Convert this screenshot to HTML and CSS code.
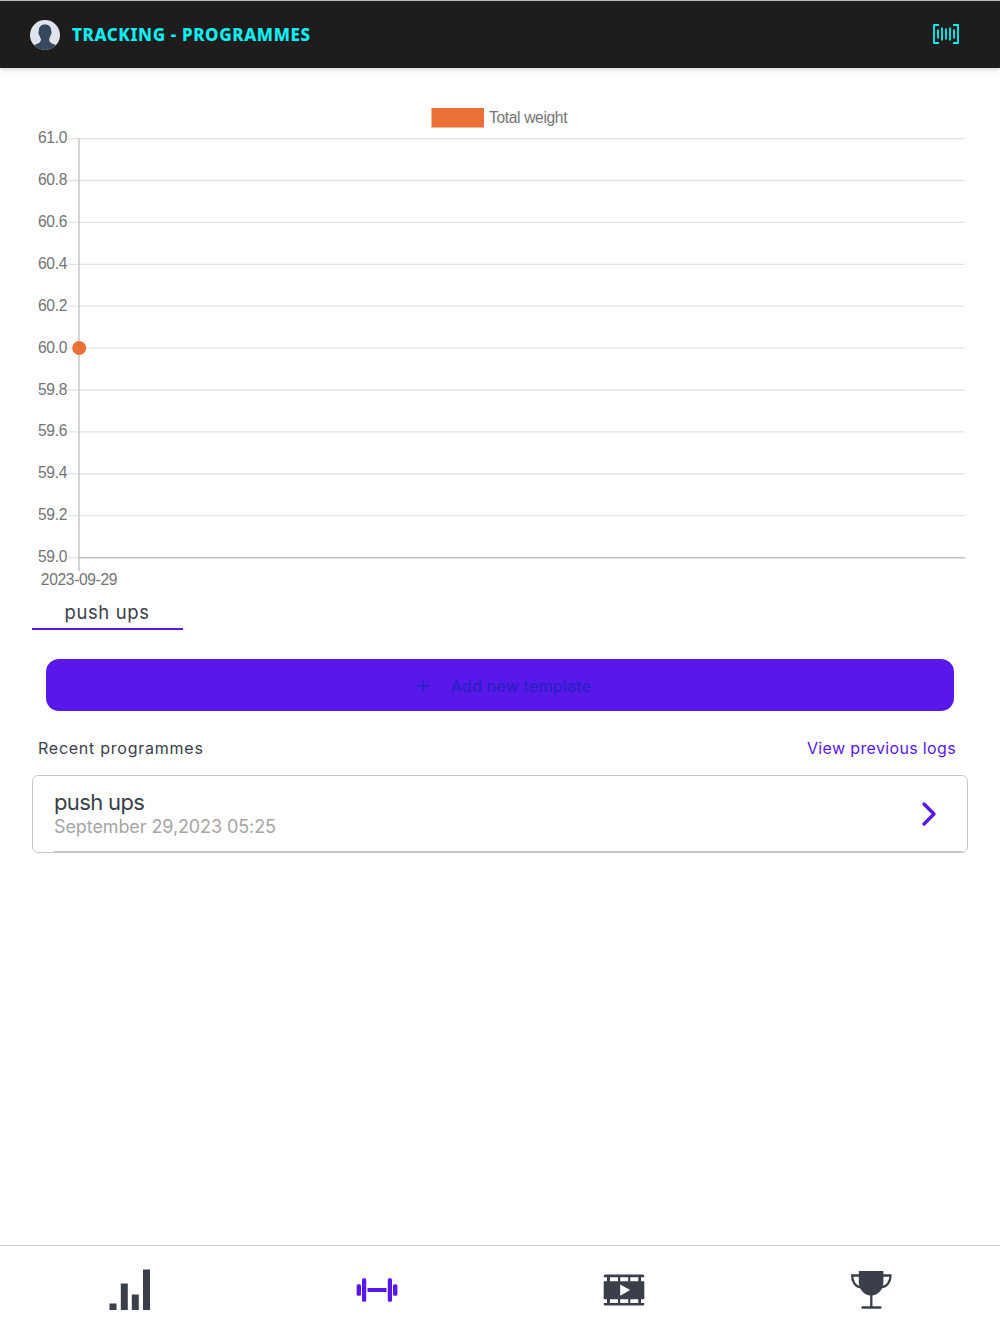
FILE: index.html
```html
<!DOCTYPE html>
<html lang="en">
<head>
    <meta charset="UTF-8">
    <meta name="viewport" content="width=device-width, initial-scale=1.0">
    <title>Tracking - Programmes</title>
    <link rel="stylesheet" href="styles.css">
</head>
<body>
    <header class="top-bar">
        <svg class="avatar" viewBox="0 0 30 30">
            <defs><clipPath id="avatar-clip"><circle cx="15" cy="15" r="15"/></clipPath></defs>
            <g clip-path="url(#avatar-clip)">
                <rect width="30" height="30" fill="#e0e5ed"/>
                <path fill="#34495e" d="M15 4.500c4 0 6.300 2.600 6.200 6.200 0 1 .5 1.300.3 2.800-.2 1-.8 1.400-1 2-.4 1.600-.8 2.500-1.400 3.300 0 2.400.8 3.500 2.500 4.400 2.500 1.200 4.600 1.500 6.500 3.800v3H2v-3c1.900-2.300 4-2.600 6.500-3.800 1.700-.9 2.500-2 2.500-4.400-.7-.8-1.100-1.700-1.500-3.300-.2-.6-.8-1-1-2-.2-1.500.3-1.800.3-2.800C8.700 7.100 11 4.500 15 4.500z"/>
            </g>
        </svg>
        <h1>TRACKING - PROGRAMMES</h1>
        <svg class="barcode" viewBox="0 0 26 20">
            <path d="M6 1H1v18h5M20 1h5v18h-5"/>
            <path d="M5 5.500v9M9 3.500v13M13 4.500v11M17 3.500v13M21 5.500v9"/>
        </svg>
    </header>

    <main>
        <svg class="chart" id="chart" viewBox="0 0 936 496">
            <rect x="399.500" y="12" width="52.500" height="19.500" fill="#eb7036"/>
            <text class="legend" x="457" y="26.500">Total weight</text>
            <g id="grid"></g>
            <path class="axis" d="M47 42.500V475M47 461.800h886"/>
            <circle cx="47.200" cy="252" r="7" fill="#eb7036"/>
            <text class="date" x="47" y="488.500" text-anchor="middle">2023-09-29</text>
        </svg>

        <div class="tabs">
            <div class="tab">push ups</div>
        </div>

        <button class="add-button">
            <svg viewBox="0 0 14 14"><path d="M7 0v14M0 7h14"/></svg>
            <span>Add new template</span>
        </button>

        <div class="list-header">
            <span class="list-title">Recent programmes</span>
            <a class="logs-link">View previous logs</a>
        </div>

        <div class="programme">
            <div class="programme-info">
                <div class="programme-name">push ups</div>
                <div class="programme-date">September 29,2023 05:25</div>
            </div>
            <svg class="chevron" viewBox="0 0 14 24"><path d="M2 2l10 10L2 22"/></svg>
        </div>
    </main>

    <nav class="bottom-nav">
        <a>
            <svg viewBox="0 0 42 42">
                <path d="M.5 34.500h7V41h-7zM11.800 14.500h7V41h-7zM22.800 25.500h7V41h-7zM34 .5h7V41h-7z"/>
            </svg>
        </a>
        <a class="active">
            <svg viewBox="0 0 42 42">
                <rect x=".6" y="15.200" width="4.400" height="11.600" rx="1.500"/>
                <rect x="6" y="9.300" width="4.200" height="23.400" rx="1.500"/>
                <rect x="11.500" y="19" width="19" height="4" rx=".5"/>
                <rect x="31.800" y="9.300" width="4.200" height="23.400" rx="1.500"/>
                <rect x="37" y="15.200" width="4.400" height="11.600" rx="1.500"/>
            </svg>
        </a>
        <a>
            <svg viewBox="0 0 42 42">
                <rect x=".7" y="5.500" width="40.600" height="31" rx="1.500"/>
                <path fill="#fff" d="M0 8.300h4v4H0zM7 8.300h8v4H7zM17.200 8.300h8v4h-8zM27.300 8.300h8v4h-8zM38 8.300h4v4h-4zM0 30.200h4v3.800H0zM7 30.200h8v3.800H7zM17.200 30.200h8v3.800h-8zM27.300 30.200h8v3.800h-8zM38 30.200h4v3.800h-4zM17.200 15.500l10 5.500-10 5.700z"/>
            </svg>
        </a>
        <a>
            <svg viewBox="0 0 42 42">
                <path d="M8.800 2.500Q8.800 2 9.800 2h22.600q1 0 1 .5V13c0 7-5 13.500-12.300 13.500S8.800 20 8.800 13z"/>
                <path class="stroke" d="M10 6.500H2.200C2 12 5 17.800 11 18.300M32 6.500h8.500C40.700 12 37.500 17.800 31 18.300M21.300 25v13M12.500 38.500h18"/>
            </svg>
        </a>
    </nav>

    <script>
        // Grid lines and y axis labels, 61.0 down to 59.0
        const grid = document.getElementById('grid');
        let lines = '';
        for (let i = 0; i <= 10; i++) {
            const y = 42.6 + i * 41.9;
            lines += `<path class="grid-line" d="M36 ${y}H933"/>`;
            lines += `<text x="35" y="${42.6 + i * 41.85 + 4.8}" text-anchor="end">${(61 - i * 0.2).toFixed(1)}</text>`;
        }
        grid.innerHTML = lines;
    </script>
</body>
</html>
```
FILE: styles.css
```css
:root {
    --primary: #5818ea;
    --accent: #10eef2;
    --dark: #3a3f4a;
    --border: #c5c9cf;
}

* {
    box-sizing: border-box;
}

body {
    margin: 0;
    height: 100vh;
    display: flex;
    flex-direction: column;
    background: #fff;
    color: var(--dark);
    font-family: Inter, "Liberation Sans", sans-serif;
}

svg {
    display: block;
}

.top-bar {
    height: 68px;
    padding: 0 41px 0 30px;
    display: flex;
    align-items: center;
    background: #1e1c1d;
    border-top: 1px solid #b9bcbc;
    box-shadow: 0 1px 5px rgba(0, 0, 0, 0.2);
}

.avatar {
    width: 30px;
    height: 30px;
    margin-right: 12px;
}

h1 {
    margin: 0;
    font-family: "Noto Sans", "Open Sans", sans-serif;
    font-size: 17px;
    line-height: 24px;
    font-weight: 800;
    letter-spacing: 0.62px;
    color: var(--accent);
}

.barcode {
    width: 26px;
    height: 20px;
    margin: -2px 0 0 auto;
    fill: none;
    stroke: var(--accent);
    stroke-width: 1.8;
}

main {
    flex: 1;
    padding: 28px 32px 0;
}

.chart {
    width: 936px;
    height: 496px;
    font-family: "Liberation Sans", Arial, sans-serif;
    font-size: 15.6px;
    letter-spacing: -0.35px;
    fill: #747474;
}

.grid-line {
    stroke: #e4e4e4;
    stroke-width: 1.3;
}

.axis {
    fill: none;
    stroke: #c6c6c6;
    stroke-width: 1.5;
}

.tab {
    width: 151px;
    height: 38px;
    padding-top: 8px;
    border-bottom: 2px solid var(--primary);
    font-size: 18.5px;
    line-height: 24px;
    letter-spacing: 0.6px;
    text-align: center;
}

.tabs {
    margin-left: -0.5px;
}

.add-button {
    display: flex;
    align-items: center;
    justify-content: center;
    gap: 21px;
    width: 908px;
    height: 52px;
    margin: 29px 14px 0;
    padding: 2px 0 0 7px;
    border: none;
    border-radius: 13px;
    background: var(--primary);
    color: #2a20c4;
    font-family: inherit;
    font-size: 16px;
    font-weight: 500;
    letter-spacing: 0.15px;
}

.add-button svg {
    width: 14px;
    height: 14px;
    fill: none;
    stroke: currentColor;
    stroke-width: 1.5;
}

.list-header {
    display: flex;
    justify-content: space-between;
    margin-top: 25px;
    padding: 0 12px 0 6px;
    font-size: 16px;
    line-height: 24px;
    font-weight: 400;
    letter-spacing: 0.35px;
}

.list-title {
    letter-spacing: 0.75px;
}

.logs-link {
    color: var(--primary);
}

.programme {
    position: relative;
    display: flex;
    align-items: center;
    justify-content: space-between;
    height: 78px;
    margin-top: 15px;
    padding: 0 31px 0 21px;
    border: 1.5px solid var(--border);
    border-radius: 6px;
}

/* item divider, starts at the text */
.programme::after {
    content: "";
    position: absolute;
    left: 21px;
    right: 4px;
    bottom: 0;
    height: 1px;
    background: var(--border);
}

.programme-name {
    font-size: 22px;
    line-height: 26px;
    letter-spacing: -0.65px;
}

.programme-date {
    font-size: 18px;
    line-height: 24px;
    letter-spacing: -0.1px;
    color: #a6a6a6;
}

.chevron {
    width: 14px;
    height: 24px;
    fill: none;
    stroke: var(--primary);
    stroke-width: 3.4;
    stroke-linecap: round;
    stroke-linejoin: round;
    overflow: visible;
}

.bottom-nav {
    display: flex;
    height: 89px;
    padding: 0 5px 0 6px;
    border-top: 1px solid #cfcfcf;
}

.bottom-nav a {
    flex: 1;
    display: flex;
    align-items: center;
    justify-content: center;
    color: var(--dark);
}

.bottom-nav .active {
    color: var(--primary);
}

.bottom-nav svg {
    width: 42px;
    height: 42px;
    fill: currentColor;
}

.bottom-nav .stroke {
    fill: none;
    stroke: currentColor;
    stroke-width: 2.3;
    stroke-linecap: round;
}
```
